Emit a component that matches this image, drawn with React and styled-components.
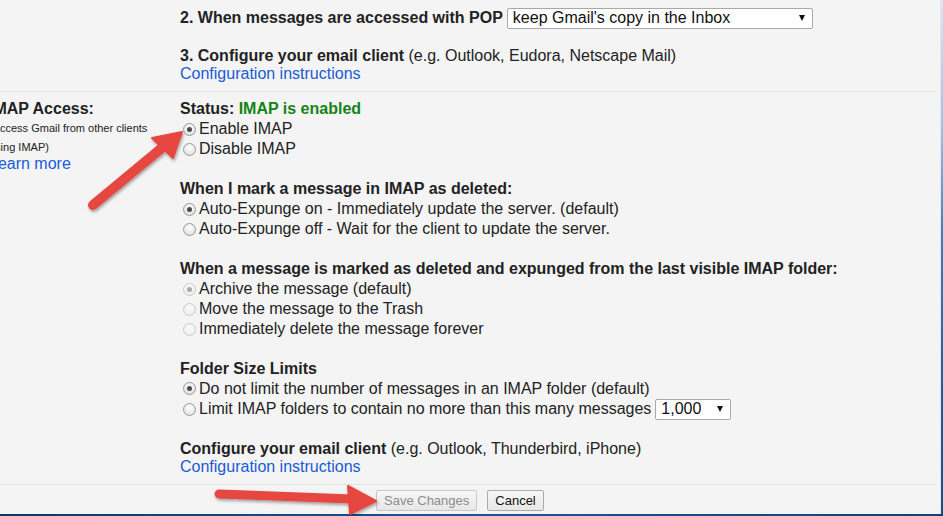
import React from 'react'
import styled, { createGlobalStyle } from 'styled-components'

const GlobalStyle = createGlobalStyle`
  html, body {
    margin: 0;
    padding: 0;
  }
  body {
    background: #173f74;
    font-family: "Liberation Sans", Arial, sans-serif;
  }
`

const imapOptions = [
  {
    title: 'When I mark a message in IMAP as deleted:',
    items: [
      { label: 'Auto-Expunge on - Immediately update the server. (default)', checked: true },
      { label: 'Auto-Expunge off - Wait for the client to update the server.' },
    ],
  },
  {
    title: 'When a message is marked as deleted and expunged from the last visible IMAP folder:',
    disabled: true,
    items: [
      { label: 'Archive the message (default)', checked: true },
      { label: 'Move the message to the Trash' },
      { label: 'Immediately delete the message forever' },
    ],
  },
]

function App() {
  return (
    <Screen>
      <GlobalStyle />
      <Desktop>
        <Window>
          <Section>
            <Side />
            <Main>
              <TopRow>
                <Heading>2. When messages are accessed with POP</Heading>
                <FakeSelect $width={306}>
                  <span>keep Gmail's copy in the Inbox</span>
                  <Caret />
                </FakeSelect>
              </TopRow>
              <ConfigBlock $top={17}>
                <Line>
                  <Heading>3. Configure your email client</Heading> (e.g. Outlook, Eudora, Netscape Mail)
                </Line>
                <Link>Configuration instructions</Link>
              </ConfigBlock>
            </Main>
          </Section>

          <Divider $top={9} />

          <Section $pad={7}>
            <Side>
              <SideTitle>IMAP Access:</SideTitle>
              <SideNote>(Access Gmail from other clients</SideNote>
              <SideNote>using IMAP)</SideNote>
              <SideLink>Learn more</SideLink>
            </Side>
            <Main>
              <Line>
                <Heading>Status: </Heading>
                <Enabled>IMAP is enabled</Enabled>
              </Line>
              <Option>
                <Radio $checked />
                Enable IMAP
              </Option>
              <Option>
                <Radio />
                Disable IMAP
              </Option>

              {imapOptions.map((group) => (
                <Group key={group.title}>
                  <Line>
                    <Heading>{group.title}</Heading>
                  </Line>
                  {group.items.map((item) => (
                    <Option key={item.label}>
                      <Radio $checked={item.checked} $disabled={group.disabled} />
                      {item.label}
                    </Option>
                  ))}
                </Group>
              ))}

              <Group>
                <Line>
                  <Heading>Folder Size Limits</Heading>
                </Line>
                <Option $height={19}>
                  <Radio $checked />
                  Do not limit the number of messages in an IMAP folder (default)
                </Option>
                <Option $height={22}>
                  <Radio />
                  Limit IMAP folders to contain no more than this many messages
                  <FakeSelect $width={76} $gap={4}>
                    <span>1,000</span>
                    <Caret />
                  </FakeSelect>
                </Option>
              </Group>

              <ConfigBlock $top={19}>
                <Line>
                  <Heading>Configure your email client</Heading> (e.g. Outlook, Thunderbird, iPhone)
                </Line>
                <Link>Configuration instructions</Link>
              </ConfigBlock>
            </Main>
          </Section>

          <Divider $top={9} />

          <Footer>
            <Button $disabled>Save Changes</Button>
            <Button>Cancel</Button>
          </Footer>
        </Window>
        <DesktopEdge />
      </Desktop>
      <Taskbar />

      <Annotations viewBox="0 0 943 516">
        <defs>
          <filter id="arrowShadow" x="-20%" y="-20%" width="140%" height="140%">
            <feDropShadow dx="1" dy="2" stdDeviation="1.6" floodColor="#000" floodOpacity="0.35" />
          </filter>
        </defs>
        <g filter="url(#arrowShadow)" fill="#e6463f" stroke="#e6463f">
          <line x1="93" y1="205" x2="163" y2="147" strokeWidth="10" strokeLinecap="round" />
          <polygon points="182,132 152,138 173,158" strokeWidth="2" strokeLinejoin="round" />
          <line x1="219" y1="494" x2="352" y2="499" strokeWidth="9" strokeLinecap="round" />
          <polygon points="376,501 348,486 350,514" strokeWidth="2" strokeLinejoin="round" />
        </g>
      </Annotations>
    </Screen>
  )
}

export default App

const Screen = styled.div`
  width: 943px;
  height: 516px;
  overflow: hidden;
  position: relative;
  display: flex;
  flex-direction: column;
`

const Desktop = styled.div`
  display: flex;
  flex: 1;
  min-height: 0;
`

const Window = styled.div`
  flex: 1;
  background: #f4f4f4;
  overflow: hidden;
  padding-top: 7px;
  color: #222;
  font-size: 16px;
  line-height: 20px;
  border-right: 1px solid #dfe6ee;
`

const DesktopEdge = styled.div`
  width: 2px;
  background: linear-gradient(#d8e7f5, #9cc3e6 25%, #3f7fc0 45%, #1f5da3 75%, #1a4f8e);
`

const Taskbar = styled.div`
  height: 2px;
  background: linear-gradient(90deg, #0f3563, #1d5591 50%, #163f73);
`

const Section = styled.div`
  display: grid;
  grid-template-columns: 191px 1fr;
  margin-left: -11px;
  padding-top: ${(p) => p.$pad || 0}px;
`

const Side = styled.div`
  display: flex;
  flex-direction: column;
`

const SideTitle = styled.div`
  font-weight: bold;
  font-size: 16px;
  line-height: 20px;
  white-space: nowrap;
`

const SideNote = styled.div`
  font-size: 11px;
  line-height: 19px;
  white-space: nowrap;
`

const SideLink = styled.div`
  color: #1a5bd4;
  font-size: 16px;
  line-height: 14px;
`

const Main = styled.div`
  display: flex;
  flex-direction: column;
`

const TopRow = styled.div`
  display: flex;
  align-items: center;
  gap: 4px;
  height: 22px;
`

const Heading = styled.span`
  font-weight: bold;
  white-space: nowrap;
`

const Enabled = styled.span`
  font-weight: bold;
  color: #148414;
`

const Line = styled.div`
  height: 20px;
  white-space: nowrap;
`

const ConfigBlock = styled.div`
  margin-top: ${(p) => p.$top}px;
`

const Link = styled.div`
  color: #1a5bd4;
  line-height: 16px;
`

const Group = styled.div`
  margin-top: 20px;
`

const Option = styled.div`
  display: flex;
  align-items: center;
  height: ${(p) => p.$height || 20}px;
  white-space: nowrap;
`

const Radio = styled.span`
  display: inline-flex;
  align-items: center;
  justify-content: center;
  box-sizing: border-box;
  width: 13px;
  height: 13px;
  flex-shrink: 0;
  margin: 0 3px 0 3px;
  border-radius: 50%;
  border: 1px solid ${(p) => (p.$disabled ? '#cbcbcb' : '#9a9a9a')};
  background: ${(p) =>
    p.$disabled
      ? 'radial-gradient(circle at 50% 35%, #fbfbfb, #e9e9e9)'
      : 'radial-gradient(circle at 50% 35%, #ffffff, #d9d9d9)'};

  &::after {
    content: '';
    display: ${(p) => (p.$checked ? 'block' : 'none')};
    width: 5px;
    height: 5px;
    border-radius: 50%;
    background: ${(p) => (p.$disabled ? '#a8a8a8' : '#4a4a4a')};
  }
`

const FakeSelect = styled.span`
  display: inline-flex;
  align-items: center;
  justify-content: space-between;
  box-sizing: border-box;
  width: ${(p) => p.$width}px;
  height: 21px;
  margin-left: ${(p) => p.$gap || 0}px;
  padding: 0 7px 0 5px;
  background: #fff;
  border: 1px solid #a9a9a9;
  border-radius: 2px;
  font-size: 16px;
  color: #111;
  font-weight: normal;
`

const Caret = styled.span`
  width: 0;
  height: 0;
  border-left: 3.5px solid transparent;
  border-right: 3.5px solid transparent;
  border-top: 6px solid #111;
`

const Divider = styled.div`
  height: 1px;
  background: #e1e1e1;
  margin: ${(p) => p.$top || 10}px 4px 0 0;
`

const Footer = styled.div`
  display: flex;
  gap: 10px;
  padding: 5px 0 0 376px;
`

const Button = styled.button`
  height: 21px;
  padding: 0 7px;
  font-family: "Liberation Sans", Arial, sans-serif;
  font-size: 13px;
  color: ${(p) => (p.$disabled ? '#8c8c8c' : '#111')};
  background: linear-gradient(#f7f7f7, #e7e7e7);
  border: 1px solid ${(p) => (p.$disabled ? '#c8c8c8' : '#acacac')};
  border-radius: 2px;
  cursor: default;
`

const Annotations = styled.svg`
  position: absolute;
  top: 0;
  left: 0;
  width: 943px;
  height: 516px;
  pointer-events: none;
`
